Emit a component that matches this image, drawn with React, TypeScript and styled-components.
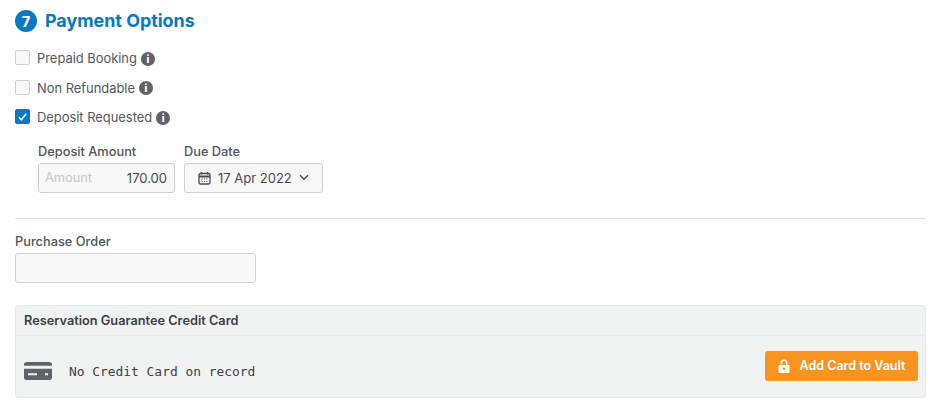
import styled, { createGlobalStyle } from "styled-components";

const GlobalStyle = createGlobalStyle`
	html, body {
		margin: 0;
		background: #fff;
	}
	body {
		font-family: Inter, "Liberation Sans", sans-serif;
		color: #50555a;
	}
`;

const Page = styled.div`
	width: 936px;
	height: 411px;
	box-sizing: border-box;
	padding: 10px 10px 0 15px;
	overflow: hidden;
`;

const Heading = styled.div`
	display: flex;
	align-items: center;
	gap: 8px;
	height: 22px;
`;

const StepBadge = styled.span`
	width: 22px;
	height: 22px;
	border-radius: 50%;
	background: #0779bf;
	color: #fff;
	font-size: 14px;
	font-weight: 800;
	display: flex;
	align-items: center;
	justify-content: center;
`;

const Title = styled.h2`
	margin: 0;
	font-size: 17.9px;
	line-height: 22px;
	font-weight: 700;
	color: #0779bf;
`;

const Options = styled.div`
	display: flex;
	flex-direction: column;
	gap: 14px;
	margin-top: 18px;
`;

const OptionRow = styled.div`
	display: flex;
	align-items: center;
	height: 15.5px;
	font-size: 12.9px;
	color: #54585d;
`;

const OptionText = styled.span`
	margin-top: 2px;
`;

const Box = styled.span<{ $checked?: boolean }>`
	width: 15px;
	height: 15px;
	box-sizing: border-box;
	border-radius: 2px;
	margin-right: 7px;
	display: flex;
	align-items: center;
	justify-content: center;
	background: ${(p) => (p.$checked ? "#0779bf" : "#f8f8f8")};
	border: 1px solid ${(p) => (p.$checked ? "#0779bf" : "#d0d0d0")};
`;

const InfoDot = styled.span`
	width: 14px;
	height: 14px;
	margin-left: 4px;
	margin-top: 2px;
	border-radius: 50%;
	background: #5f6368;
	color: #fff;
	font-size: 10px;
	font-weight: 800;
	display: flex;
	align-items: center;
	justify-content: center;
`;

const DepositFields = styled.div`
	display: flex;
	gap: 9px;
	margin: 18px 0 0 23px;
`;

const Field = styled.div`
	display: flex;
	flex-direction: column;
`;

const FieldLabel = styled.label`
	font-size: 12.8px;
	line-height: 16px;
	font-weight: 500;
	color: #50555a;
	padding-top: 1px;
	margin-bottom: 3px;
`;

const InputBox = styled.div<{ $width: number }>`
	width: ${(p) => p.$width}px;
	height: 30px;
	box-sizing: border-box;
	border: 1px solid #cfd1d1;
	border-radius: 3px;
	background: #f8f8f8;
	display: flex;
	align-items: center;
	font-size: 13px;
	color: #484c50;
`;

const AmountBox = styled(InputBox)`
	justify-content: space-between;
	padding: 0 7px 0 6px;
`;

const Placeholder = styled.span`
	font-size: 12.8px;
	color: #c4c6c8;
`;

const DateBox = styled(InputBox)`
	padding-left: 13px;
	gap: 7px;
`;

const Divider = styled.hr`
	border: 0;
	border-top: 1px solid #e4e4e4;
	margin: 25px 0 0;
`;

const OrderField = styled(Field)`
	margin-top: 14px;
`;

const Panel = styled.section`
	margin-top: 22px;
	height: 93px;
	box-sizing: border-box;
	border: 1px solid #e8eaea;
	border-radius: 3px;
	background: #f1f3f3;
`;

const PanelHeader = styled.div`
	height: 29px;
	padding-left: 8px;
	border-bottom: 1px solid #e8eaea;
	display: flex;
	align-items: center;
	font-size: 12.75px;
	font-weight: 600;
	color: #3c4043;
`;

const PanelBody = styled.div`
	display: flex;
	align-items: flex-start;
	justify-content: space-between;
	padding: 15px 7px 0 8px;
`;

const CardInfo = styled.div`
	display: flex;
	align-items: center;
	gap: 17px;
	padding-top: 11px;
	font-family: "DejaVu Sans Mono", "Liberation Mono", monospace;
	font-size: 12.9px;
	color: #3c4043;
`;

const CardText = styled.span`
	margin-top: 2px;
`;

const VaultButton = styled.button`
	width: 153px;
	height: 30px;
	border: 0;
	border-radius: 3px;
	background: #f9951e;
	color: #fff;
	font-family: inherit;
	font-size: 12.5px;
	font-weight: 600;
	display: flex;
	align-items: center;
	justify-content: center;
	gap: 10px;
`;

function Option({ label, checked }: { label: string; checked?: boolean }) {
	return (
		<OptionRow>
			<Box $checked={checked}>
				{checked ? (
					<svg width="11" height="11" viewBox="0 0 12 12" fill="none">
						<path d="M2 6.5 4.8 9.5 10 3" stroke="#fff" strokeWidth="1.8" />
					</svg>
				) : null}
			</Box>
			<OptionText>{label}</OptionText>
			<InfoDot>i</InfoDot>
		</OptionRow>
	);
}

export default function App() {
	return (
		<Page>
			<GlobalStyle />
			<Heading>
				<StepBadge>7</StepBadge>
				<Title>Payment Options</Title>
			</Heading>

			<Options>
				<Option label="Prepaid Booking" />
				<Option label="Non Refundable" />
				<Option label="Deposit Requested" checked />
			</Options>

			<DepositFields>
				<Field>
					<FieldLabel>Deposit Amount</FieldLabel>
					<AmountBox $width={137}>
						<Placeholder>Amount</Placeholder>
						170.00
					</AmountBox>
				</Field>
				<Field>
					<FieldLabel>Due Date</FieldLabel>
					<DateBox $width={139}>
						<svg width="13" height="14" viewBox="0 0 13 14" fill="none">
							<rect x="1" y="2.5" width="11" height="10.5" rx="1.5" stroke="#484c50" strokeWidth="1.3" />
							<path d="M1 5.5h11" stroke="#484c50" strokeWidth="2" />
							<path d="M3.5 1v2.5M9.5 1v2.5" stroke="#484c50" strokeWidth="1.4" />
							<path d="M3.5 8h6M3.5 10.5h6" stroke="#484c50" strokeWidth="1.2" strokeDasharray="1.2 1.2" />
						</svg>
						17 Apr 2022
						<svg width="10" height="7" viewBox="0 0 10 7" fill="none">
							<path d="M1 1.2 5 5.2 9 1.2" stroke="#484c50" strokeWidth="1.5" />
						</svg>
					</DateBox>
				</Field>
			</DepositFields>

			<Divider />

			<OrderField>
				<FieldLabel>Purchase Order</FieldLabel>
				<InputBox $width={241} />
			</OrderField>

			<Panel>
				<PanelHeader>Reservation Guarantee Credit Card</PanelHeader>
				<PanelBody>
					<CardInfo>
						<svg width="28" height="18" viewBox="0 0 28 19" preserveAspectRatio="none">
							<path
								d="M3 0h22a3 3 0 0 1 3 3v1H0V3a3 3 0 0 1 3-3ZM0 7h28v9a3 3 0 0 1-3 3H3a3 3 0 0 1-3-3V7Zm4 5v2h9v-2H4Zm17 0v2h3v-2h-3Z"
								fill="#5f6368"
							/>
						</svg>
						<CardText>No Credit Card on record</CardText>
					</CardInfo>
					<VaultButton>
						<svg width="12" height="14" viewBox="0 0 12 14">
							<path
								d="M2.5 6V4a3.5 3.5 0 0 1 7 0v2h1a1 1 0 0 1 1 1v6a1 1 0 0 1-1 1h-9a1 1 0 0 1-1-1V7a1 1 0 0 1 1-1h1Zm1.6 0h3.8V4a1.9 1.9 0 0 0-3.8 0v2ZM6 8.6a1.3 1.3 0 1 0 0 2.6 1.3 1.3 0 0 0 0-2.6Z"
								fill="#fff"
								fillRule="evenodd"
							/>
						</svg>
						Add Card to Vault
					</VaultButton>
				</PanelBody>
			</Panel>
		</Page>
	);
}
